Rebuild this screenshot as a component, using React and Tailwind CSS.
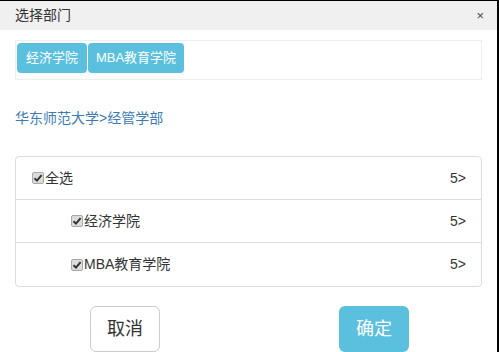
import React from 'react';

const font = { fontFamily: '"Liberation Sans", "Noto Sans CJK SC", sans-serif' };

function Check() {
  return (
    <span className="inline-flex items-center justify-center w-[12px] h-[12px] rounded-[2px] border border-[#a8a8a8] bg-[#dcdcdc] mr-[1px]">
      <svg width="10" height="10" viewBox="0 0 10 10">
        <path d="M1.5 5.2 L4 7.6 L8.6 2.2" fill="none" stroke="#333" strokeWidth="2" />
      </svg>
    </span>
  );
}

function Row({ label, indent, last }) {
  return (
    <div className={`flex items-center justify-between h-[43px] pr-[15px] ${indent ? 'pl-[55px]' : 'pl-[16px]'} ${last ? '' : 'border-b border-[#dddddd]'}`}>
      <div className="flex items-center text-[14px] text-[#333]">
        <Check />
        <span>{label}</span>
      </div>
      <span className="text-[14px] text-[#333]">5&gt;</span>
    </div>
  );
}

export default function App() {
  const rows = [
    { label: '全选', indent: false },
    { label: '经济学院', indent: true },
    { label: 'MBA教育学院', indent: true },
  ];
  return (
    <div className="w-[499px] h-[352px] overflow-hidden bg-white border-t border-black border-r-2" style={font}>
      <div className="flex items-center justify-between h-[29px] bg-[#f0f0f0] pl-[15px] pr-[13px]">
        <span className="text-[14px] text-[#333]">选择部门</span>
        <span className="text-[13px] text-[#444]">×</span>
      </div>
      <div className="px-[15px]">
        <div className="mt-[10px] h-[40px] border border-[#eeeeee] flex items-start pt-[2px] pl-[1px]">
          <span className="flex items-center justify-center h-[30px] w-[70px] rounded-[4px] bg-[#5bc0de] text-white text-[13px]">经济学院</span>
          <span className="flex items-center justify-center h-[30px] w-[96px] rounded-[4px] bg-[#5bc0de] text-white text-[13px] ml-[1px]">MBA教育学院</span>
        </div>
        <div className="mt-[29px] text-[14px] text-[#3b7bb3] leading-[18px]">华东师范大学&gt;经管学部</div>
        <div className="mt-[29px] border border-[#dddddd] rounded-[4px]">
          {rows.map((r, i) => (
            <Row key={i} {...r} last={i === rows.length - 1} />
          ))}
        </div>
        <div className="flex mt-[19px]">
          <button className="ml-[75px] w-[70px] h-[46px] rounded-[6px] border border-[#cccccc] bg-white text-[18px] text-[#333]">取消</button>
          <button className="ml-[179px] w-[70px] h-[46px] rounded-[6px] bg-[#5bc0de] text-[18px] text-white">确定</button>
        </div>
      </div>
    </div>
  );
}
